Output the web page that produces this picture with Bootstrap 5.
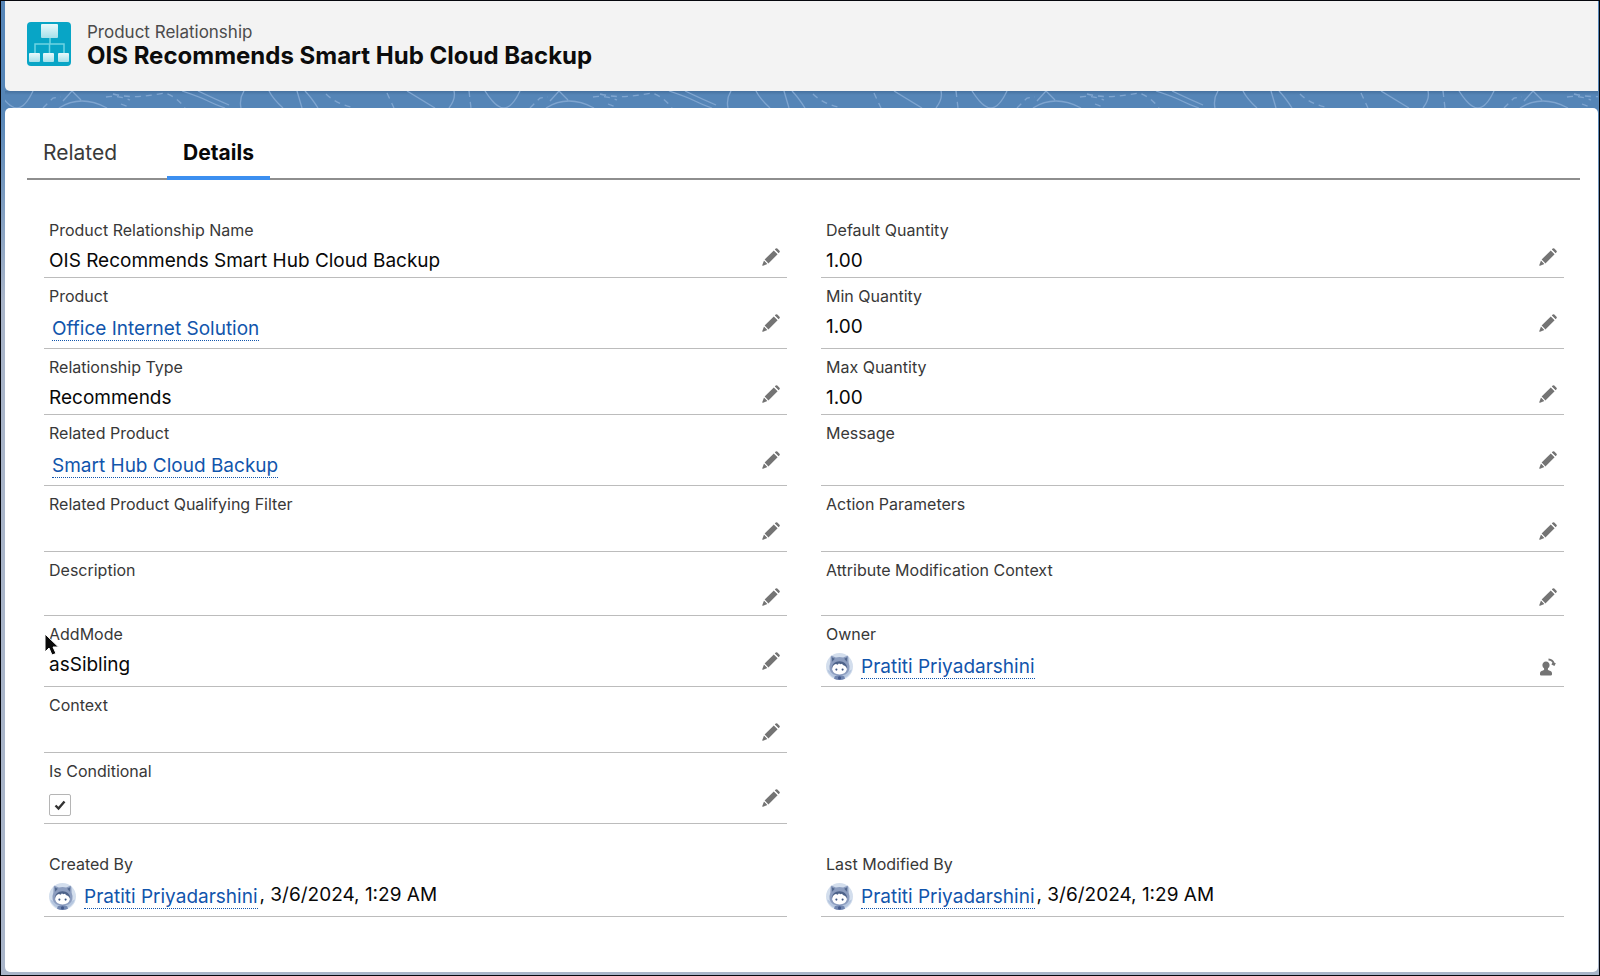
<!DOCTYPE html>
<html lang="en">
<head>
<meta charset="utf-8">
<meta name="viewport" content="width=device-width, initial-scale=1">
<title>Product Relationship</title>
<link href="https://cdn.jsdelivr.net/npm/bootstrap@5.3.0/dist/css/bootstrap.min.css" rel="stylesheet">
<script src="https://cdn.jsdelivr.net/npm/bootstrap@5.3.0/dist/js/bootstrap.bundle.min.js"></script>
<style>
  body { font-family: Inter, "Liberation Sans", sans-serif; font-size: 19px; line-height: 24px; color: #080808; background: #fff; }
  .page-frame { border: 1px solid #05070d; padding: 0 1px 3px 4px; background: linear-gradient(#5585b7 0, #5585b7 107px, #a9b5c9 300px, #a9b5c9 100%); }
  .record-header { background: #f3f3f3; border-radius: 0 0 0 5px; padding: 21px 22px 21px; gap: 16px; }
  .record-kind { font-size: 17px; line-height: 20px; color: #4b4b4b; }
  .record-title { font-size: 24px; line-height: 28px; font-weight: 700; color: #0c0c0c; }
  .topo-band { height: 17px; background: linear-gradient(#46719f, #5585b7 4px); }
  .record-card { border-radius: 5px; padding: 31px 18px 40px 22px; }
  .record-tabs { border-bottom: 2px solid #8e8e8e; gap: 34px; }
  .record-tabs .tab-btn { border: 0; background: none; padding: 0 16px 9px; font-size: 21px; line-height: 28px; color: #3a3a3a; margin-bottom: -2px; border-bottom: 4px solid transparent; border-radius: 0; }
  .record-tabs .tab-btn.active { font-weight: 700; color: #080808; border-bottom-color: #3c8ff0; }
  .field-area { padding: 32px 16px 0 17px; }
  .field-pair { --bs-gutter-x: 34px; }
  .field-cell { min-height: 66px; padding: 8px 7px 0 5px; border-bottom: 1px solid #bcbcbc; height: 100%; }
  .field-short .field-cell { min-height: 64px; }
  .field-tall .field-cell { min-height: 71px; }
  .field-label { font-size: 16px; line-height: 20px; color: #383838; display: block; }
  .field-value { margin-top: 9px; line-height: 24px; }
  .field-link { color: #1155ac; text-decoration: none; border-bottom: 1px dotted #1155ac; line-height: 22px; margin-top: 3px; }
  .field-link.lookup { margin-left: 3px; }
  .stamp { margin-left: 2px; }
  .edit-btn { border: 0; background: none; padding: 0; width: 18px; height: 18px; margin-top: 28px; color: #747474; line-height: 0; }
  .owner-btn { margin-top: 34px; }
  .audit-pair { margin-top: 22px; }
  .cond-box { appearance: none; width: 22px; height: 22px; margin-top: 13px; border: 1px solid #b5b5b5; border-radius: 2px; display: block; background: #fff url("data:image/svg+xml,%3Csvg xmlns='http://www.w3.org/2000/svg' viewBox='0 0 18 18'%3E%3Cpath d='M4.5 9.5l3 3 6-7' fill='none' stroke='%23333' stroke-width='2.4'/%3E%3C/svg%3E") center/18px no-repeat; }
  .pointer-mark { position: absolute; left: -1px; top: 17px; }
</style>
</head>
<body>
<svg width="0" height="0" class="position-absolute" aria-hidden="true">
  <symbol id="pencil" viewBox="0 0 18 18">
    <path d="M12.800 1.400l.9-.9q.8-.7 1.600 0l2.200 2.200q.7.8 0 1.600l-.9.900zM11.800 2.400l3.800 3.800-9.200 9.200-3.800-3.800zM2 12.600l3.400 3.400-4.300 1.700q-1 .2-.8-.8z" fill="currentColor"/>
    <path d="M12.200 1.900l3.900 3.900M2.200 12l3.800 3.800" stroke="#fff" stroke-width=".7"/>
  </symbol>
  <symbol id="astro" viewBox="0 0 26 26">
    <circle cx="13" cy="13" r="13" fill="#d3deed"/>
    <path d="M1 16q12 7 24 0a12.500 12.500 0 0 1-24 0z" fill="#b5c6df"/>
    <path d="M4.500 4q0-1.500 1.500-1.200l3.500 1.500q3.500-1 7 0L20 2.800q1.500-.3 1.500 1.200l.3 5.500Q23 12 22.500 16q-2 6-9.500 6t-9.500-6q-.5-4 .7-6.500z" fill="#8c9dbf"/>
    <path d="M5.500 4l3 1.500-2.500 3zM20.500 4l-3 1.500 2.500 3z" fill="#52688f"/>
    <path d="M5.500 14.500q1-6.500 7.500-6.500t7.500 6.500l-2 1-11 0z" fill="#4d6289"/>
    <path d="M5.900 16q0-4 3.600-5.300l1.800.5 1.200-1.300 1 1 2-.6.800 1.200q3.800 1.200 3.800 4.500-1.500 4.700-7.100 4.700t-7.100-4.700z" fill="#fff"/>
    <circle cx="10" cy="16" r="1" fill="#3c5481"/><circle cx="16" cy="16" r="1" fill="#3c5481"/>
    <path d="M8.500 22.500q4.500-2 9 0l.8 2.200q-5.300 2.400-10.600 0z" fill="#7186b0"/><circle cx="13" cy="24" r="1.500" fill="#42588a"/>
  </symbol>
</svg>

<div class="page-frame min-vh-100 d-flex flex-column">
  <header class="record-header d-flex align-items-start">
    <svg width="44" height="44" viewBox="0 0 44 44" aria-hidden="true">
      <defs><linearGradient id="tile" x2="0" y2="1"><stop stop-color="#e9f9fb"/><stop offset="1" stop-color="#a5e0ea"/></linearGradient></defs>
      <rect width="44" height="44" rx="4" fill="#08a5c6"/>
      <path d="M23 16v6M8 31v-9h29v9M22.500 22v9" fill="none" stroke="#6fd3e2" stroke-width="1.500"/>
      <rect x="14" y="2" width="17" height="14" rx="1" fill="url(#tile)"/>
      <rect x="2" y="31" width="11" height="9" rx="1" fill="url(#tile)"/>
      <rect x="16" y="31" width="11" height="9" rx="1" fill="url(#tile)"/>
      <rect x="31" y="31" width="11" height="9" rx="1" fill="url(#tile)"/>
    </svg>
    <div>
      <div class="record-kind">Product Relationship</div>
      <h1 class="record-title mb-0">OIS Recommends Smart Hub Cloud Backup</h1>
    </div>
  </header>

  <div class="topo-band">
    <svg class="d-block w-100 h-100" aria-hidden="true">
      <defs>
        <pattern id="topo" width="487" height="17" patternUnits="userSpaceOnUse">
          <g fill="none" stroke="#7fa5d0" stroke-width="1.300">
            <path d="M-7 0Q4 17 12 17T28 0M480 0Q491 17 499 17M54 17Q76 3 102 17M58 10L67 0 76 9M177 0Q195 6 203 10T220 17M193 0Q212 9 224 14M239 0Q234 8 236 17M264 0Q268 8 278 17M292 0L297 17M300 0Q306 6 313 17M402 0Q412 6 430 17M449 0Q451 8 444 17"/>
            <path stroke-dasharray="6 5" d="M38 17L48 7 56 6M101 6Q113 4 125 9M108 3Q125 7 140 5T160 2Q172 6 180 17M116 13L126 17M321 3Q331 13 350 17M382 2L389 17M464 0L466 17"/>
          </g>
        </pattern>
      </defs>
      <rect width="100%" height="100%" fill="url(#topo)"/>
    </svg>
  </div>

  <main class="record-card bg-white flex-grow-1">
    <div class="record-tabs d-flex" role="tablist">
      <button type="button" class="tab-btn" role="tab" aria-selected="false">Related</button>
      <button type="button" class="tab-btn active" role="tab" aria-selected="true">Details</button>
    </div>

    <div class="field-area">
      <div class="row field-pair">
        <div class="col-6"><div class="field-cell d-flex justify-content-between align-items-start">
          <div><span class="field-label">Product Relationship Name</span><div class="field-value">OIS Recommends Smart Hub Cloud Backup</div></div>
          <button type="button" class="edit-btn" aria-label="Edit Product Relationship Name"><svg width="18" height="18"><use href="#pencil"/></svg></button>
        </div></div>
        <div class="col-6"><div class="field-cell d-flex justify-content-between align-items-start">
          <div><span class="field-label">Default Quantity</span><div class="field-value">1.00</div></div>
          <button type="button" class="edit-btn" aria-label="Edit Default Quantity"><svg width="18" height="18"><use href="#pencil"/></svg></button>
        </div></div>
      </div>
      <div class="row field-pair field-tall">
        <div class="col-6"><div class="field-cell d-flex justify-content-between align-items-start">
          <div><span class="field-label">Product</span><div class="field-value"><a href="#" class="field-link lookup d-inline-block">Office Internet Solution</a></div></div>
          <button type="button" class="edit-btn" aria-label="Edit Product"><svg width="18" height="18"><use href="#pencil"/></svg></button>
        </div></div>
        <div class="col-6"><div class="field-cell d-flex justify-content-between align-items-start">
          <div><span class="field-label">Min Quantity</span><div class="field-value">1.00</div></div>
          <button type="button" class="edit-btn" aria-label="Edit Min Quantity"><svg width="18" height="18"><use href="#pencil"/></svg></button>
        </div></div>
      </div>
      <div class="row field-pair">
        <div class="col-6"><div class="field-cell d-flex justify-content-between align-items-start">
          <div><span class="field-label">Relationship Type</span><div class="field-value">Recommends</div></div>
          <button type="button" class="edit-btn" aria-label="Edit Relationship Type"><svg width="18" height="18"><use href="#pencil"/></svg></button>
        </div></div>
        <div class="col-6"><div class="field-cell d-flex justify-content-between align-items-start">
          <div><span class="field-label">Max Quantity</span><div class="field-value">1.00</div></div>
          <button type="button" class="edit-btn" aria-label="Edit Max Quantity"><svg width="18" height="18"><use href="#pencil"/></svg></button>
        </div></div>
      </div>
      <div class="row field-pair field-tall">
        <div class="col-6"><div class="field-cell d-flex justify-content-between align-items-start">
          <div><span class="field-label">Related Product</span><div class="field-value"><a href="#" class="field-link lookup d-inline-block">Smart Hub Cloud Backup</a></div></div>
          <button type="button" class="edit-btn" aria-label="Edit Related Product"><svg width="18" height="18"><use href="#pencil"/></svg></button>
        </div></div>
        <div class="col-6"><div class="field-cell d-flex justify-content-between align-items-start">
          <span class="field-label">Message</span>
          <button type="button" class="edit-btn" aria-label="Edit Message"><svg width="18" height="18"><use href="#pencil"/></svg></button>
        </div></div>
      </div>
      <div class="row field-pair">
        <div class="col-6"><div class="field-cell d-flex justify-content-between align-items-start">
          <span class="field-label">Related Product Qualifying Filter</span>
          <button type="button" class="edit-btn" aria-label="Edit Related Product Qualifying Filter"><svg width="18" height="18"><use href="#pencil"/></svg></button>
        </div></div>
        <div class="col-6"><div class="field-cell d-flex justify-content-between align-items-start">
          <span class="field-label">Action Parameters</span>
          <button type="button" class="edit-btn" aria-label="Edit Action Parameters"><svg width="18" height="18"><use href="#pencil"/></svg></button>
        </div></div>
      </div>
      <div class="row field-pair field-short">
        <div class="col-6"><div class="field-cell d-flex justify-content-between align-items-start">
          <span class="field-label">Description</span>
          <button type="button" class="edit-btn" aria-label="Edit Description"><svg width="18" height="18"><use href="#pencil"/></svg></button>
        </div></div>
        <div class="col-6"><div class="field-cell d-flex justify-content-between align-items-start">
          <span class="field-label">Attribute Modification Context</span>
          <button type="button" class="edit-btn" aria-label="Edit Attribute Modification Context"><svg width="18" height="18"><use href="#pencil"/></svg></button>
        </div></div>
      </div>
      <div class="row field-pair field-tall">
        <div class="col-6"><div class="field-cell position-relative d-flex justify-content-between align-items-start">
          <div><span class="field-label">AddMode</span><div class="field-value">asSibling</div></div>
          <button type="button" class="edit-btn" aria-label="Edit AddMode"><svg width="18" height="18"><use href="#pencil"/></svg></button>
          <svg class="pointer-mark" width="18" height="26" viewBox="0 0 18 26" aria-hidden="true"><path d="M2 1v18l4-4 3 7 4-1.500-3-6.500h5.500z" fill="#0a0a0a" stroke="#fff" stroke-width="1"/></svg>
        </div></div>
        <div class="col-6"><div class="field-cell d-flex justify-content-between align-items-start">
          <div><span class="field-label">Owner</span>
            <div class="field-value d-flex align-items-start"><svg class="me-2" width="27" height="27"><use href="#astro"/></svg><a href="#" class="field-link">Pratiti Priyadarshini</a></div></div>
          <button type="button" class="edit-btn owner-btn" aria-label="Change Owner"><svg width="18" height="18" viewBox="0 0 18 18"><path d="M1 16.500q-.5-3.500 3-4 1.800-.5 1-2.300a3.600 3.600 0 1 1 4 0q-.8 1.800 1 2.300 3.500.5 3 4-.2 1-1.200 1H2q-.9 0-1-1z" fill="currentColor"/><path d="M9.500 1.500q4.500.2 5.300 4.500M12.800 5.800l2.200 1 1-2" fill="none" stroke="currentColor" stroke-width="1.800"/></svg></button>
        </div></div>
      </div>
      <div class="row field-pair">
        <div class="col-6"><div class="field-cell d-flex justify-content-between align-items-start">
          <span class="field-label">Context</span>
          <button type="button" class="edit-btn" aria-label="Edit Context"><svg width="18" height="18"><use href="#pencil"/></svg></button>
        </div></div>
      </div>
      <div class="row field-pair field-tall">
        <div class="col-6"><div class="field-cell d-flex justify-content-between align-items-start">
          <div><label class="field-label" for="isConditional">Is Conditional</label><div class="field-value"><input type="checkbox" class="cond-box" id="isConditional" checked></div></div>
          <button type="button" class="edit-btn" aria-label="Edit Is Conditional"><svg width="18" height="18"><use href="#pencil"/></svg></button>
        </div></div>
      </div>
      <div class="row field-pair field-tall audit-pair">
        <div class="col-6"><div class="field-cell">
          <span class="field-label">Created By</span>
          <div class="field-value d-flex align-items-start"><svg class="me-2" width="27" height="27"><use href="#astro"/></svg><a href="#" class="field-link">Pratiti Priyadarshini</a><span class="stamp">, 3/6/2024, 1:29 AM</span></div>
        </div></div>
        <div class="col-6"><div class="field-cell">
          <span class="field-label">Last Modified By</span>
          <div class="field-value d-flex align-items-start"><svg class="me-2" width="27" height="27"><use href="#astro"/></svg><a href="#" class="field-link">Pratiti Priyadarshini</a><span class="stamp">, 3/6/2024, 1:29 AM</span></div>
        </div></div>
      </div>
    </div>
  </main>
</div>
</body>
</html>
